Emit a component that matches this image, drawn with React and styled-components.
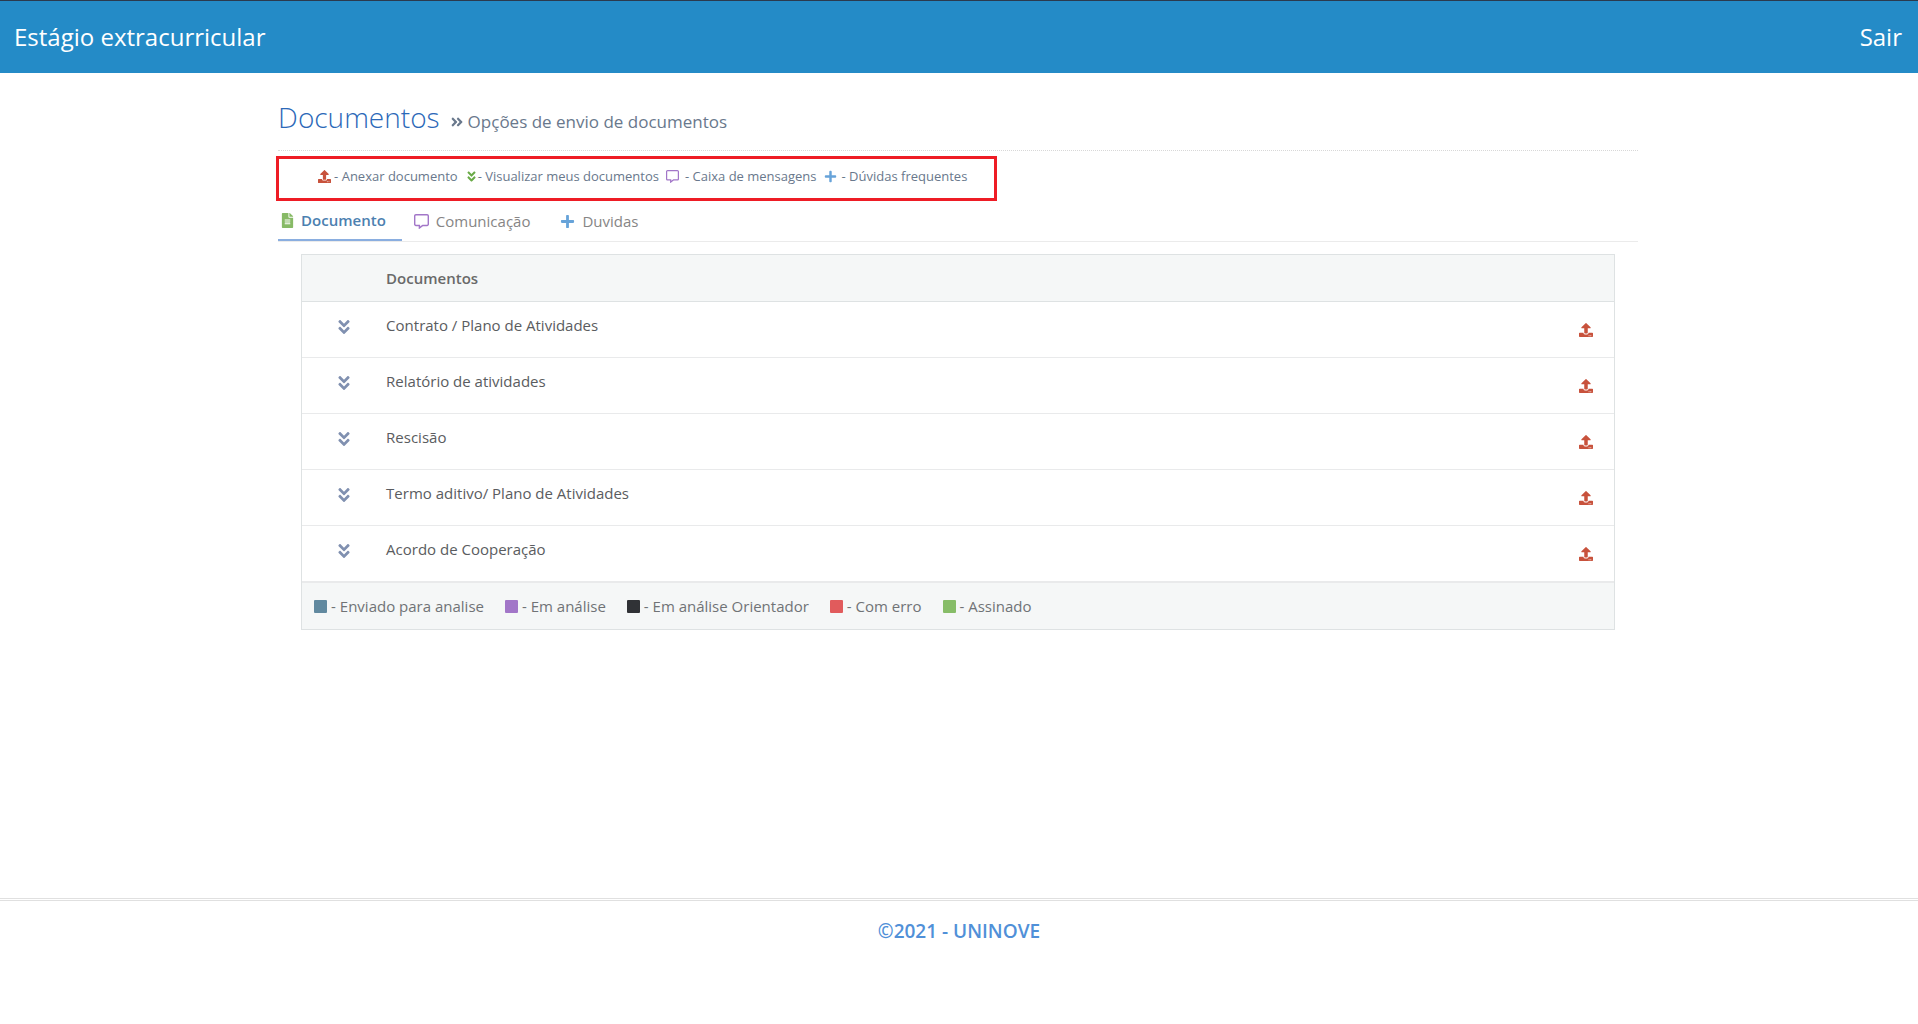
import React, { useState } from 'react'
import { styled, createGlobalStyle } from 'styled-components'
import {
  FaAngleDoubleDown,
  FaAngleDoubleRight,
  FaFileAlt,
  FaPlus,
  FaRegCommentAlt,
  FaUpload,
} from 'react-icons/fa'


const GlobalStyle = createGlobalStyle`
    * {
        box-sizing: border-box;
    }

    body {
        margin: 0;
        background: #fff;
        color: #5a5c60;
        font-family: "Open Sans", "Noto Sans", sans-serif;
        font-size: 15px;
        line-height: 24px;
    }

    button {
        padding: 0;
        border: 0;
        background: none;
        font: inherit;
        cursor: pointer;
    }
`

const Page = styled.div`
    display: flex;
    flex-direction: column;
    min-height: 100vh;
`

const Navbar = styled.header`
    display: flex;
    align-items: center;
    justify-content: space-between;
    height: 73px;
    padding: 0 16px 0 14px;
    border-top: 1px solid #2b3a4e;
    background: #248bc7;
    font-size: 24px;
`

const NavLink = styled.a`
    color: #fff;
    text-decoration: none;
`

const Main = styled.main`
    flex: 1;
    margin: 0 14.6% 0 14.5%;
`

const PageHeader = styled.div`
    display: flex;
    align-items: flex-start;
    gap: 10px;
    padding: 24px 0 13px;
    border-bottom: 1px dotted #d8d8d8;
`

const Title = styled.h1`
    margin: 0;
    color: #2b68b8;
    font-size: 28px;
    font-weight: 300;
    line-height: 40px;
`

const Subtitle = styled.small`
    display: flex;
    align-items: center;
    gap: 4px;
    padding-top: 13px;
    color: #69788c;
    font-size: 17px;
`

const Shortcuts = styled.ul`
    display: flex;
    align-items: flex-start;
    gap: 7px;
    width: 721px;
    height: 45px;
    margin: 5px 0 0 -2px;
    padding: 5px 0 0 39px;
    border: 3px solid #ee1c25;
    list-style: none;
    color: #69788c;
    font-size: 13px;
    white-space: nowrap;
`

const Shortcut = styled.li`
    display: flex;
    align-items: center;
    gap: ${(props) => props.$gap}px;
`

const Icon = styled.span`
    display: inline-flex;
    color: ${(props) => props.$color};
    font-size: ${(props) => props.$size}px;
`

const Tabs = styled.div`
    display: flex;
    gap: 9px;
    border-bottom: 1px solid #ebebeb;
`

const Tab = styled.button`
    display: flex;
    align-items: center;
    gap: 7px;
    height: 41px;
    margin-bottom: -1px;
    padding: 1px 18px 0 3px;
    border-bottom: 2px solid transparent;
    color: #868585;

    &[aria-selected='true'] {
        gap: 6px;
        padding: 0 16px 0 2px;
        height: 40px;
        border-bottom-color: #8aaee0;
        color: #4c80b0;
        font-weight: 600;
    }
`

const Panel = styled.div`
    padding: 12px 23px;
`

const Table = styled.table`
    width: 100%;
    border: 1px solid #dee2e3;
    border-collapse: separate;
    border-spacing: 0;
    table-layout: fixed;
`

const ToggleCol = styled.col`
    width: 84px;
`

const UploadCol = styled.col`
    width: 56px;
`

const HeadCell = styled.th`
    height: 47px;
    padding: 0;
    border-bottom: 1px solid #dee2e3;
    background: #f5f7f7;
    color: #696969;
    font-weight: 600;
    text-align: left;
`

const Cell = styled.td`
    height: 56px;
    padding: 11px 0 0;
    border-bottom: 1px solid #e9eaeb;
    vertical-align: top;
    text-align: ${(props) => props.$align || 'left'};
`

const IconButton = styled.button`
    display: inline-flex;
    align-items: center;
    justify-content: center;
    width: 24px;
    height: ${(props) => props.$height}px;
    color: ${(props) => props.$color};
    font-size: ${(props) => props.$size}px;
    vertical-align: top;
`

const FootCell = styled.td`
    height: 47px;
    padding: 0 12px;
    border-top: 1px solid #e9eaeb;
    background: #f5f7f7;
    color: #707376;
`

const Legend = styled.div`
    display: flex;
    flex-wrap: wrap;
    gap: 21px;
`

const LegendItem = styled.span`
    display: flex;
    align-items: center;
    gap: 4px;
`

const Swatch = styled.span`
    width: 13px;
    height: 13px;
    border-radius: 1px;
    background: ${(props) => props.$color};
`

const Footer = styled.footer`
    height: 126px;
    padding-top: 16px;
    border-top: 3px double #e0e0e0;
    color: #5090d8;
    font-size: 19px;
    font-weight: 600;
    line-height: 28px;
    text-align: center;
`

const shortcuts = [
  { icon: <FaUpload />, color: '#c8523c', text: '- Anexar documento', gap: 3 },
  { icon: <FaAngleDoubleDown />, color: '#69aa46', text: '- Visualizar meus documentos', gap: 0 },
  { icon: <FaRegCommentAlt />, color: '#a276c8', text: '- Caixa de mensagens', gap: 6 },
  { icon: <FaPlus />, color: '#67a3d9', text: '- Dúvidas frequentes', gap: 5 },
]

const tabs = [
  { icon: <FaFileAlt />, color: '#87ba66', text: 'Documento' },
  { icon: <FaRegCommentAlt />, color: '#a276c8', text: 'Comunicação' },
  { icon: <FaPlus />, color: '#67a3d9', text: 'Duvidas' },
]

const documentos = [
  'Contrato / Plano de Atividades',
  'Relatório de atividades',
  'Rescisão',
  'Termo aditivo/ Plano de Atividades',
  'Acordo de Cooperação',
]

const status = [
  { color: '#61899f', text: '- Enviado para analise' },
  { color: '#a276c8', text: '- Em análise' },
  { color: '#303236', text: '- Em análise Orientador' },
  { color: '#e15b5c', text: '- Com erro' },
  { color: '#87bd68', text: '- Assinado' },
]

function DocumentTable() {
  return (
    <Table>
        <colgroup>
            <ToggleCol />
            <col />
            <UploadCol />
        </colgroup>
        <thead>
            <tr>
                <HeadCell />
                <HeadCell scope="col">Documentos</HeadCell>
                <HeadCell />
            </tr>
        </thead>
        <tbody>
            {documentos.map((nome) => (
                <tr key={nome}>
                    <Cell $align="center">
                        <IconButton $color="#8090b0" $size={18} $height={28} aria-label={`Visualizar ${nome}`}>
                            <FaAngleDoubleDown />
                        </IconButton>
                    </Cell>
                    <Cell>{nome}</Cell>
                    <Cell $align="center">
                        <IconButton $color="#c8523c" $size={14} $height={34} aria-label={`Anexar ${nome}`}>
                            <FaUpload />
                        </IconButton>
                    </Cell>
                </tr>
            ))}
        </tbody>
        <tfoot>
            <tr>
                <FootCell colSpan={3}>
                    <Legend>
                        {status.map((item) => (
                            <LegendItem key={item.text}>
                                <Swatch $color={item.color} />
                                {item.text}
                            </LegendItem>
                        ))}
                    </Legend>
                </FootCell>
            </tr>
        </tfoot>
    </Table>
  )
}

export default function App() {
  const [active, setActive] = useState('Documento')

  return (
    <Page>
        <GlobalStyle />
        <Navbar>
            <NavLink href="#inicio">Estágio extracurricular</NavLink>
            <NavLink href="#sair">Sair</NavLink>
        </Navbar>

        <Main>
            <PageHeader>
                <Title>Documentos</Title>
                <Subtitle>
                    <FaAngleDoubleRight size={14} />
                    Opções de envio de documentos
                </Subtitle>
            </PageHeader>

            <Shortcuts>
                {shortcuts.map((item) => (
                    <Shortcut key={item.text} $gap={item.gap}>
                        <Icon $color={item.color} $size={13}>{item.icon}</Icon>
                        {item.text}
                    </Shortcut>
                ))}
            </Shortcuts>

            <Tabs role="tablist">
                {tabs.map((tab) => (
                    <Tab
                        key={tab.text}
                        role="tab"
                        aria-selected={active === tab.text}
                        onClick={() => setActive(tab.text)}
                    >
                        <Icon $color={tab.color} $size={15}>{tab.icon}</Icon>
                        {tab.text}
                    </Tab>
                ))}
            </Tabs>

            <Panel>
                <DocumentTable />
            </Panel>
        </Main>

        <Footer>©2021 - UNINOVE</Footer>
    </Page>
  )
}
